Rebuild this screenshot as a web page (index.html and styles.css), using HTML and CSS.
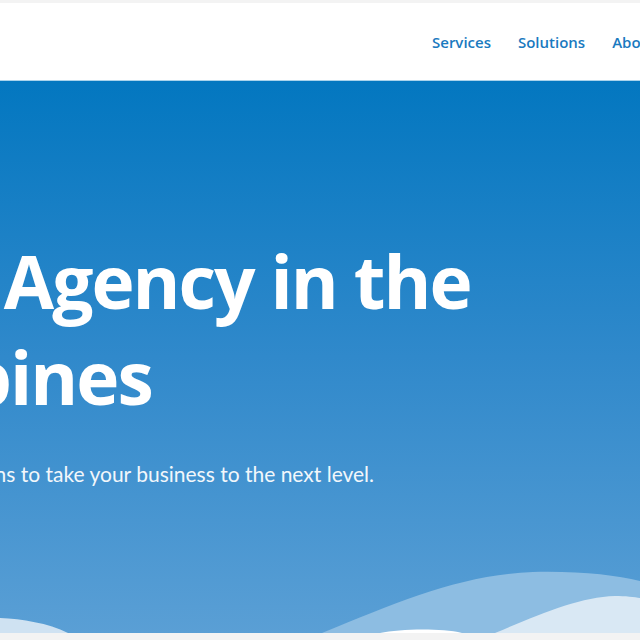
FILE: index.html
```html
<!DOCTYPE html>
<html lang="en">
<head>
<meta charset="utf-8">
<title>Digital Agency in the Philippines</title>
<link rel="stylesheet" href="styles.css">
</head>
<body>
<div class="page">
  <header class="site-header">
    <nav class="nav">
      <a class="nav-link" href="#">Services</a>
      <a class="nav-link" href="#">Solutions</a>
      <a class="nav-link" href="#">About Us</a>
      <a class="nav-link" href="#">Contact</a>
    </nav>
  </header>
  <section class="hero">
    <div class="hero-content">
      <h1 class="hero-title">
        <span class="line line-1">Digital Agency in the</span>
        <span class="line line-2">Philippines</span>
      </h1>
      <p class="hero-sub">We offer digital solutions to take your business to the next level.</p>
    </div>
    <svg class="waves" viewBox="0 0 640 64" preserveAspectRatio="none" aria-hidden="true">
      <path d="M0,49 C22,50 48,54 68,64 L0,64 Z" fill="#cfe2f2"/>
      <path d="M322,64 C400,32 460,6 533,3 C580,2 615,6 640,12 L640,64 Z" fill="#8dbde2"/>
      <path d="M495,64 C540,45 580,28 615,27 C625,27 635,28 640,29 L640,64 Z" fill="#d9e8f4"/>
      <path d="M380,64 C400,60 440,59 462,64 Z" fill="#ffffff"/>
    </svg>
  </section>
</div>
</body>
</html>
```

FILE: styles.css
```css
html, body {
  margin: 0;
  padding: 0;
}
body {
  background: #f3f3f3;
  overflow: hidden;
}
.page {
  width: 640px;
  padding: 3px 0 6px;
  overflow: hidden;
}
.site-header {
  height: 78px;
  background: #ffffff;
  border-bottom: 1px solid #a9d3ec;
  display: flex;
  align-items: center;
  padding-left: 432px;
  box-sizing: border-box;
  width: 640px;
  overflow: hidden;
}
.nav {
  display: flex;
  gap: 27px;
  white-space: nowrap;
  padding-top: 1px;
}
.nav-link {
  font-family: "Open Sans", sans-serif;
  font-weight: 600;
  font-size: 15px;
  color: #1a7abf;
  text-decoration: none;
}
.hero {
  height: 552px;
  background: linear-gradient(180deg, #0377c0 0%, #3089cb 50%, #5a9fd5 100%);
  display: flex;
  flex-direction: column;
  overflow: hidden;
}
.hero-content {
  padding-top: 152px;
}
.hero-title {
  margin: 0;
  font-family: "Open Sans", sans-serif;
  font-weight: 700;
  font-size: 73px;
  letter-spacing: -2px;
  line-height: 96px;
  color: #ffffff;
  white-space: nowrap;
}
.line {
  display: block;
}
.line-1 {
  margin-left: -237px;
}
.line-2 {
  margin-left: -229px;
}
.hero-sub {
  margin: 36px 0 0 -215px;
  font-family: Lato, sans-serif;
  font-size: 21px;
  color: #f2f7fb;
  white-space: nowrap;
}
.waves {
  display: block;
  width: 640px;
  height: 64px;
  margin-top: auto;
}
```
